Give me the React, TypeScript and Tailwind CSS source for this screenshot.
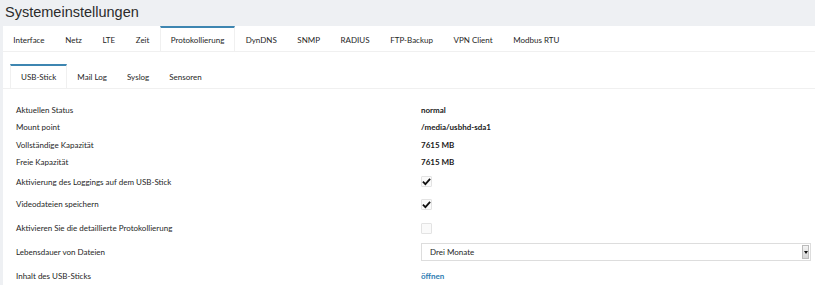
import React from "react";

const mainTabs = ["Interface", "Netz", "LTE", "Zeit", "Protokollierung", "DynDNS", "SNMP", "RADIUS", "FTP-Backup", "VPN Client", "Modbus RTU"];
const subTabs = ["USB-Stick", "Mail Log", "Syslog", "Sensoren"];

const Check = ({ checked }: { checked: boolean }) => (
    <div className="w-[11px] h-[11px] border border-[#e3e3e3] bg-[#fafafa] rounded-[1px] flex items-center justify-center">
        {checked && (
            <svg width="10" height="9" viewBox="0 0 10 9">
                <path d="M1 4.6 L3.8 7.4 L9 1.6" fill="none" stroke="#111" strokeWidth="2" />
            </svg>
        )}
    </div>
);

const Row = ({ label, h, children }: { label: string; h: string; children?: React.ReactNode }) => (
    <div className={`flex items-center ${h}`}>
        <div className="w-[405px] shrink-0">{label}</div>
        <div className="flex-1 flex items-center">{children}</div>
    </div>
);

const App = () => {
    return (
        <div className="w-[815px] h-[285px] overflow-hidden bg-[#eef0f3] text-[#262626]" style={{ fontFamily: "Lato, 'Open Sans', sans-serif" }}>
            <h1 className="h-[26px] pl-[5px] pt-[1px] text-[14.5px] leading-[22px] text-[#2b2b2b]" style={{ fontFamily: "'Liberation Sans', Arial, sans-serif" }}>
                Systemeinstellungen
            </h1>
            <div className="ml-[3px] bg-white h-full">
                {/* Haupt-Tabs */}
                <div className="flex h-[26px] border-b border-[#f0f0f0] text-[8px]">
                    {mainTabs.map(t => (
                        <div
                            key={t}
                            className={t === "Protokollierung"
                                ? "px-[10px] flex items-center border-t-2 border-t-[#3e86b1] border-x border-x-[#f0f0f0] bg-white"
                                : "px-[10.3px] flex items-center border-t-2 border-t-transparent"}
                        >
                            {t}
                        </div>
                    ))}
                </div>

                {/* Unter-Tabs */}
                <div className="flex h-[37px] pt-[12px] pl-[7px] border-b border-[#f0f0f0] text-[8px]">
                    {subTabs.map(t => (
                        <div
                            key={t}
                            className={t === "USB-Stick"
                                ? "px-[10px] flex items-center border-t-2 border-t-[#3e86b1] border-x border-x-[#f0f0f0]"
                                : "px-[10px] flex items-center border-t-2 border-t-transparent"}
                        >
                            {t}
                        </div>
                    ))}
                </div>

                {/* Einstellungen */}
                <div className="pl-[13px] pr-[4px] pt-[12px] text-[8px]">
                    <Row label="Aktuellen Status" h="h-[17.5px]"><span className="font-bold text-[#1a1a1a]">normal</span></Row>
                    <Row label="Mount point" h="h-[17.5px]"><span className="font-bold text-[#1a1a1a]">/media/usbhd-sda1</span></Row>
                    <Row label="Vollständige Kapazität" h="h-[17.5px]"><span className="font-bold text-[#1a1a1a]">7615 MB</span></Row>
                    <Row label="Freie Kapazität" h="h-[17.5px]"><span className="font-bold text-[#1a1a1a]">7615 MB</span></Row>
                    <Row label="Aktivierung des Loggings auf dem USB-Stick" h="h-[21px]"><Check checked /></Row>
                    <Row label="Videodateien speichern" h="h-[24px]"><Check checked /></Row>
                    <Row label="Aktivieren Sie die detaillierte Protokollierung" h="h-[24px]"><Check checked={false} /></Row>
                    <Row label="Lebensdauer von Dateien" h="h-[24px]">
                        <div className="flex-1 h-[18px] border border-[#ddd] flex items-center justify-between pl-[8px] pr-[1px]">
                            <span>Drei Monate</span>
                            <div className="w-[7px] h-[14px] bg-gradient-to-b from-[#f4f4f4] to-[#d6d6d6] border border-[#bbb] flex items-center justify-center">
                                <svg width="4" height="3" viewBox="0 0 4 3"><path d="M0 0 H4 L2 3 Z" fill="#111" /></svg>
                            </div>
                        </div>
                    </Row>
                    <Row label="Inhalt des USB-Sticks" h="h-[24px]"><span className="font-bold text-[#2f7db3]">öffnen</span></Row>
                </div>
            </div>
        </div>
    );
};

export default App;
